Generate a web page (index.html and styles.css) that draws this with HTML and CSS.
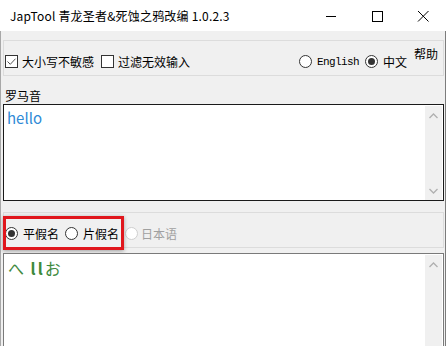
FILE: index.html
```html
<!DOCTYPE html>
<html lang="zh-CN">
<head>
  <meta charset="UTF-8">
  <title>JapTool</title>
  <link rel="stylesheet" href="styles.css">
</head>
<body>
  <div class="titlebar">
    <span class="title">JapTool 青龙圣者&amp;死蚀之鸦改编 1.0.2.3</span>
    <div class="controls">
      <span class="ctl"><svg width="12" height="12" viewBox="0 0 12 12"><path d="M1 6.5h10" stroke="#000" stroke-width="1"/></svg></span>
      <span class="ctl"><svg width="12" height="12" viewBox="0 0 12 12"><rect x="1.5" y="1.5" width="10" height="10" fill="none" stroke="#000"/></svg></span>
      <span class="ctl"><svg width="12" height="12" viewBox="0 0 12 12"><path d="M1 1l10.5 10.5M11.5 1L1 11.5" stroke="#000" stroke-width="1"/></svg></span>
    </div>
  </div>

  <div class="content">
    <div class="group opts">
      <label class="chk"><span class="box checked"><svg width="11" height="11" viewBox="0 0 11 11"><path d="M1.5 5.5l2.8 2.8 5.2-5.6" fill="none" stroke="#555" stroke-width="1"/></svg></span>大小写不敏感</label>
      <label class="chk"><span class="box"></span>过滤无效输入</label>
      <div class="lang">
        <label class="rad"><span class="dot"></span><span class="mono">English</span></label>
        <label class="rad"><span class="dot on"></span>中文</label>
      </div>
      <span class="help">帮助</span>
    </div>

    <div class="field-label">罗马音</div>
    <div class="textbox active">
      <div class="text blue">hello</div>
      <div class="scrollbar">
        <svg width="9" height="6" viewBox="0 0 9 6"><path d="M0.5 5L4.5 1l4 4" fill="none" stroke="#b0b0b0" stroke-width="1.3"/></svg>
        <svg width="9" height="6" viewBox="0 0 9 6"><path d="M0.5 1l4 4 4-4" fill="none" stroke="#b0b0b0" stroke-width="1.3"/></svg>
      </div>
    </div>

    <div class="group kana">
      <label class="rad"><span class="dot on"></span>平假名</label>
      <label class="rad"><span class="dot"></span>片假名</label>
      <label class="rad disabled"><span class="dot"></span>日本语</label>
      <div class="mark"></div>
    </div>

    <div class="textbox lower">
      <div class="text green">へ <b>ll</b>お</div>
      <div class="scrollbar">
        <svg width="9" height="6" viewBox="0 0 9 6"><path d="M0.5 5L4.5 1l4 4" fill="none" stroke="#b0b0b0" stroke-width="1.3"/></svg>
      </div>
    </div>
  </div>
</body>
</html>
```

FILE: styles.css
```css
* {
  margin: 0;
  padding: 0;
  box-sizing: border-box;
}

body {
  width: 446px;
  height: 346px;
  overflow: hidden;
  background: #f0f0f0;
  font-family: "Noto Sans CJK SC", "Noto Sans", sans-serif;
  font-size: 12px;
  color: #000;
  display: flex;
  flex-direction: column;
}

.titlebar {
  height: 31px;
  background: #fff;
  display: flex;
  align-items: center;
  flex-shrink: 0;
}

.title {
  padding-left: 10px;
  font-size: 12px;
  letter-spacing: 0.2px;
  color: #000;
}

.controls {
  margin-left: auto;
  display: flex;
  height: 100%;
}

.ctl {
  width: 46px;
  display: flex;
  align-items: center;
  justify-content: center;
}

.content {
  flex: 1;
  min-height: 0;
  border-left: 1px solid #a8a8a8;
  border-right: 1px solid #7c7c7c;
  padding: 9px 1px 0 2px;
  display: flex;
  flex-direction: column;
}

.group {
  position: relative;
  flex-shrink: 0;
  border: 1px solid #dcdcdc;
  height: 36px;
  display: flex;
  align-items: center;
  padding: 7px 0 0 1px;
}

.chk, .rad {
  display: flex;
  align-items: center;
  line-height: 14px;
  white-space: nowrap;
}

.box {
  width: 13px;
  height: 13px;
  border: 1px solid #333;
  background: #fff;
  margin-right: 4px;
  display: flex;
  align-items: center;
  justify-content: center;
}

.chk + .chk {
  margin-left: 7px;
}

.lang {
  margin-left: auto;
  margin-right: 36px;
  display: flex;
  gap: 6px;
}

.dot {
  width: 13px;
  height: 13px;
  border: 1px solid #333;
  border-radius: 50%;
  background: #fff;
  margin-right: 5px;
  display: flex;
  align-items: center;
  justify-content: center;
}

.dot.on::after {
  content: "";
  width: 7px;
  height: 7px;
  border-radius: 50%;
  background: #333;
}

.mono {
  font-family: "Liberation Mono", monospace;
  font-size: 11px;
  letter-spacing: -0.6px;
}

.help {
  position: absolute;
  right: 5px;
  top: 4px;
}

.field-label {
  margin-top: 12px;
  padding-left: 2px;
  line-height: 16px;
}

.textbox {
  position: relative;
  flex-shrink: 0;
  background: #fff;
  border: 1px solid #1a1a1a;
  display: flex;
  padding: 1px 1px 0 0;
}

.textbox.active {
  height: 97px;
}

.textbox.lower {
  flex: 1;
  min-height: 0;
  border-color: #7a7a7a;
  border-bottom: none;
  margin-top: 5px;
}

.text {
  flex: 1;
  padding: 2px 0 0 3px;
  font-size: 15px;
  line-height: 20px;
}

.blue {
  color: #2f8ad6;
}

.green {
  color: #3e8a3e;
  font-size: 16px;
  padding-top: 3px;
  padding-left: 4px;
}

.green b {
  font-weight: bold;
  letter-spacing: 2px;
  margin-left: 3px;
}

.scrollbar {
  width: 17px;
  background: #f0f0f0;
  display: flex;
  flex-direction: column;
  justify-content: space-between;
  align-items: center;
  padding: 7px 0 6px;
}

.kana {
  margin-top: 11px;
  padding-left: 1px;
}

.kana .rad {
  margin-right: 6px;
}

.kana .rad.disabled {
  color: #a0a0a0;
}

.kana .rad.disabled .dot {
  border-color: #cfcfcf;
  margin-right: 3px;
}

.mark {
  position: absolute;
  left: -1px;
  top: 3px;
  width: 121px;
  height: 34px;
  border: 3px solid #e0161c;
  box-shadow: 0 1px 4px rgba(0, 0, 0, 0.35);
}
```
